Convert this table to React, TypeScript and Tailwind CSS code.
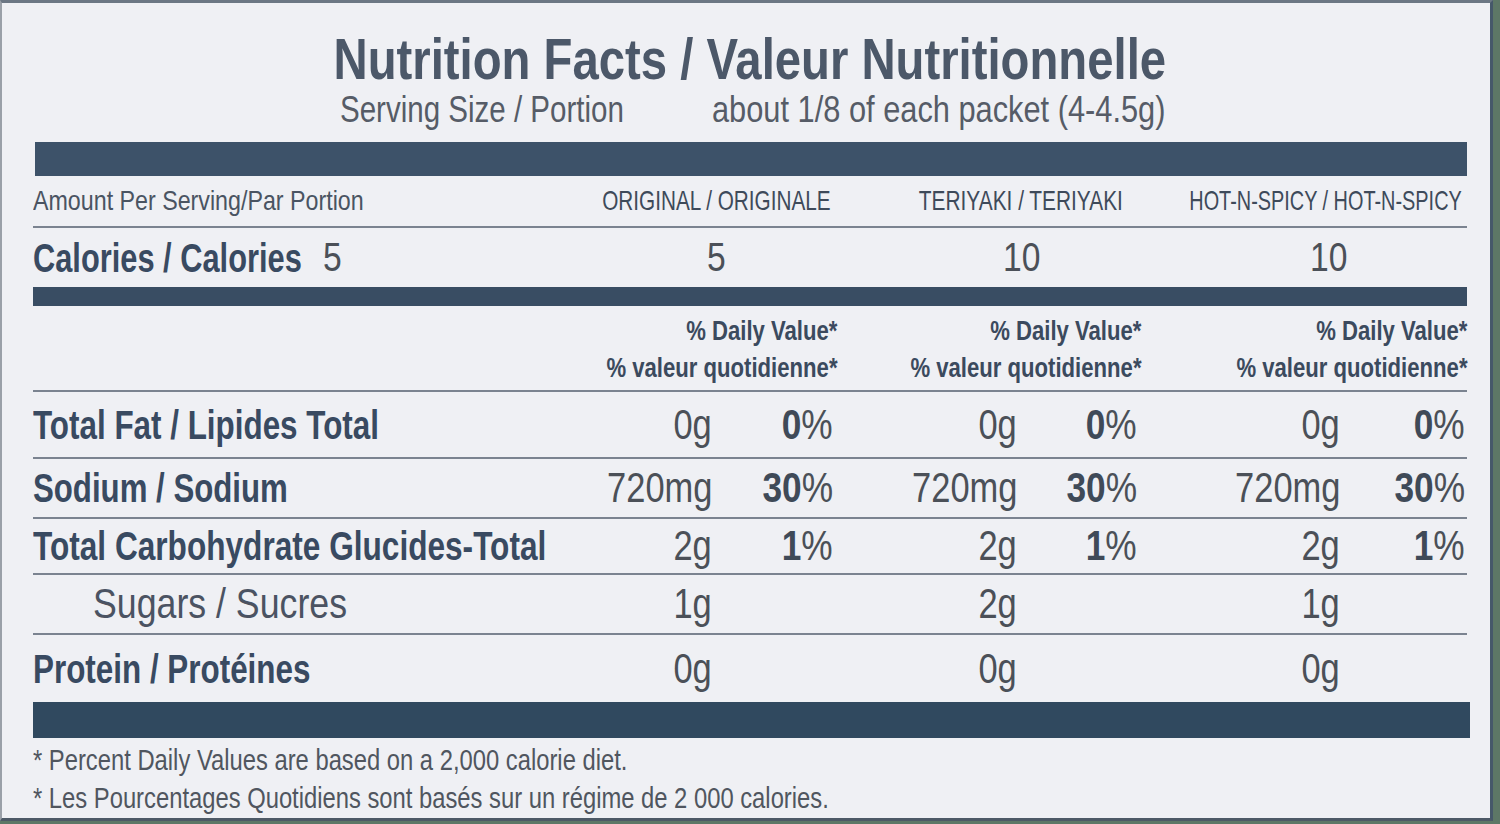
import type { ReactNode } from "react";

const grid = "grid grid-cols-[527px_152px_125px_180px_124px_199px_127px]";

// the label face is a condensed grotesque; Liberation Sans squeezed on x stands in for it
function Squeeze({ children, className = "" }: { children: ReactNode; className?: string }) {
  return <span className={`inline-block whitespace-nowrap ${className}`}>{children}</span>;
}

const flavours = [
  { name: "ORIGINAL / ORIGINALE", pad: "pr-[6px]", squeeze: "scale-x-[0.74]" },
  { name: "TERIYAKI / TERIYAKI", pad: "pr-[18px]", squeeze: "scale-x-[0.745]" },
  { name: "HOT-N-SPICY / HOT-N-SPICY", pad: "pr-[5px]", squeeze: "scale-x-[0.71]" },
];

const nutrients = [
  { label: "Total Fat / Lipides Total", bold: true, h: "h-[67px]", squeeze: "scale-x-[0.785]", amounts: ["0g", "0g", "0g"], pct: ["0", "0", "0"] },
  { label: "Sodium / Sodium", bold: true, h: "h-[60px]", squeeze: "scale-x-[0.78]", amounts: ["720mg", "720mg", "720mg"], pct: ["30", "30", "30"] },
  { label: "Total Carbohydrate Glucides-Total", bold: true, h: "h-[56px]", squeeze: "scale-x-[0.79]", amounts: ["2g", "2g", "2g"], pct: ["1", "1", "1"] },
  { label: "Sugars / Sucres", bold: false, h: "h-[60px]", squeeze: "scale-x-[0.85]", amounts: ["1g", "2g", "1g"], pct: null },
  { label: "Protein / Protéines", bold: true, h: "h-[67px]", squeeze: "scale-x-[0.785]", amounts: ["0g", "0g", "0g"], pct: null },
];

const pctPad = ["pr-[4px]", "pr-[4px]", "pr-[2px]"];

function Bar({ className }: { className: string }) {
  return <div className={className} />;
}

export default function App() {
  return (
    <div className="flex h-[824px] w-[1500px] overflow-hidden bg-[#5d7766]">
      <div className="h-[821px] w-[1493px] border-t-[3px] border-r-[3px] border-b-[3px] border-l-2 border-t-[#6c7784] border-r-[#46586a] border-b-[#4d5966] border-l-[#9aa0a8] bg-[#eff0f4] pl-[31px] font-['Liberation_Sans',Arial,sans-serif]">
        <div className="w-[1434px]">
          <div className="flex justify-center pt-[27px] text-[58px] leading-none font-bold text-[#4c5869]">
            <Squeeze className="origin-center scale-x-[0.815]">Nutrition Facts / Valeur Nutritionnelle</Squeeze>
          </div>
          <div className="mt-[4px] flex text-[36px] leading-none text-[#565c67]">
            <div className="w-[679px] pl-[307px]">
              <Squeeze className="origin-left scale-x-[0.82]">Serving Size / Portion</Squeeze>
            </div>
            <Squeeze className="origin-left scale-x-[0.855]">about 1/8 of each packet (4-4.5g)</Squeeze>
          </div>

          <Bar className="mt-[14px] ml-[2px] h-[34px] bg-[#3d5269]" />

          <div className={`${grid} h-[52px] items-center border-b-2 border-[#7b8390]`}>
            <div className="text-[28px] leading-none text-[#4a5462]">
              <Squeeze className="origin-left scale-x-[0.83]">Amount Per Serving/Par Portion</Squeeze>
            </div>
            {flavours.map((f) => (
              <div key={f.name} className={`col-span-2 flex justify-end text-[28px] leading-none text-[#3e4a5a] ${f.pad}`}>
                <Squeeze className={`origin-right ${f.squeeze}`}>{f.name}</Squeeze>
              </div>
            ))}
          </div>

          <div className={`${grid} h-[59px] items-center`}>
            <div className="flex items-center leading-none">
              <div className="w-[290px] text-[40px] font-bold text-[#394a61]">
                <Squeeze className="origin-left scale-x-[0.77]">Calories / Calories</Squeeze>
              </div>
              <Squeeze className="origin-left scale-x-[0.82] text-[41px] text-[#4b5058]">5</Squeeze>
            </div>
            <div className="col-span-2 pl-[147px] text-[41px] leading-none text-[#4b5058]">
              <Squeeze className="origin-left scale-x-[0.82]">5</Squeeze>
            </div>
            <div className="col-span-2 pl-[166px] text-[41px] leading-none text-[#4b5058]">
              <Squeeze className="origin-left scale-x-[0.82]">10</Squeeze>
            </div>
            <div className="col-span-2 pl-[169px] text-[41px] leading-none text-[#4b5058]">
              <Squeeze className="origin-left scale-x-[0.82]">10</Squeeze>
            </div>
          </div>

          <Bar className="h-[19px] bg-[#394d63]" />

          <div className={`${grid} h-[86px] items-center border-b-2 border-[#7b8390] pt-[2px]`}>
            <div />
            {[0, 1, 2].map((i) => (
              <div key={i} className="col-span-2 flex flex-col items-end text-[28px] leading-[37px] font-bold text-[#3b4a5e]">
                <Squeeze className="origin-right scale-x-[0.79]">% Daily Value*</Squeeze>
                <Squeeze className="origin-right scale-x-[0.79]">% valeur quotidienne*</Squeeze>
              </div>
            ))}
          </div>

          {nutrients.map((n, r) => (
            <div
              key={n.label}
              className={`${grid} ${n.h} items-center ${r < nutrients.length - 1 ? "border-b-2 border-[#7b8390]" : ""}`}
            >
              <div
                className={
                  n.bold
                    ? "text-[40px] leading-none font-bold text-[#394a61]"
                    : "pl-[60px] text-[42px] leading-none text-[#4b5362]"
                }
              >
                <Squeeze className={`origin-left ${n.squeeze}`}>{n.label}</Squeeze>
              </div>
              {n.amounts.map((a, i) => (
                <div key={i} className="contents">
                  <div className="flex justify-end text-[42px] leading-none text-[#4b5058]">
                    <Squeeze className="origin-right scale-x-[0.82]">{a}</Squeeze>
                  </div>
                  <div className={`flex justify-end text-[42px] leading-none text-[#4b5058] ${pctPad[i]}`}>
                    {n.pct ? (
                      <Squeeze className="origin-right scale-x-[0.84]">
                        <span className="font-bold text-[#3f4a58]">{n.pct[i]}</span>%
                      </Squeeze>
                    ) : null}
                  </div>
                </div>
              ))}
            </div>
          ))}

          <Bar className="h-[36px] w-[1437px] bg-[#30495f]" />

          <div className="flex flex-col items-start pt-[3px] text-[29px] leading-[38px] text-[#50565f]">
            <Squeeze className="origin-left scale-x-[0.82]">* Percent Daily Values are based on a 2,000 calorie diet.</Squeeze>
            <Squeeze className="origin-left scale-x-[0.82]">* Les Pourcentages Quotidiens sont basés sur un régime de 2 000 calories.</Squeeze>
          </div>
        </div>
      </div>
    </div>
  );
}
